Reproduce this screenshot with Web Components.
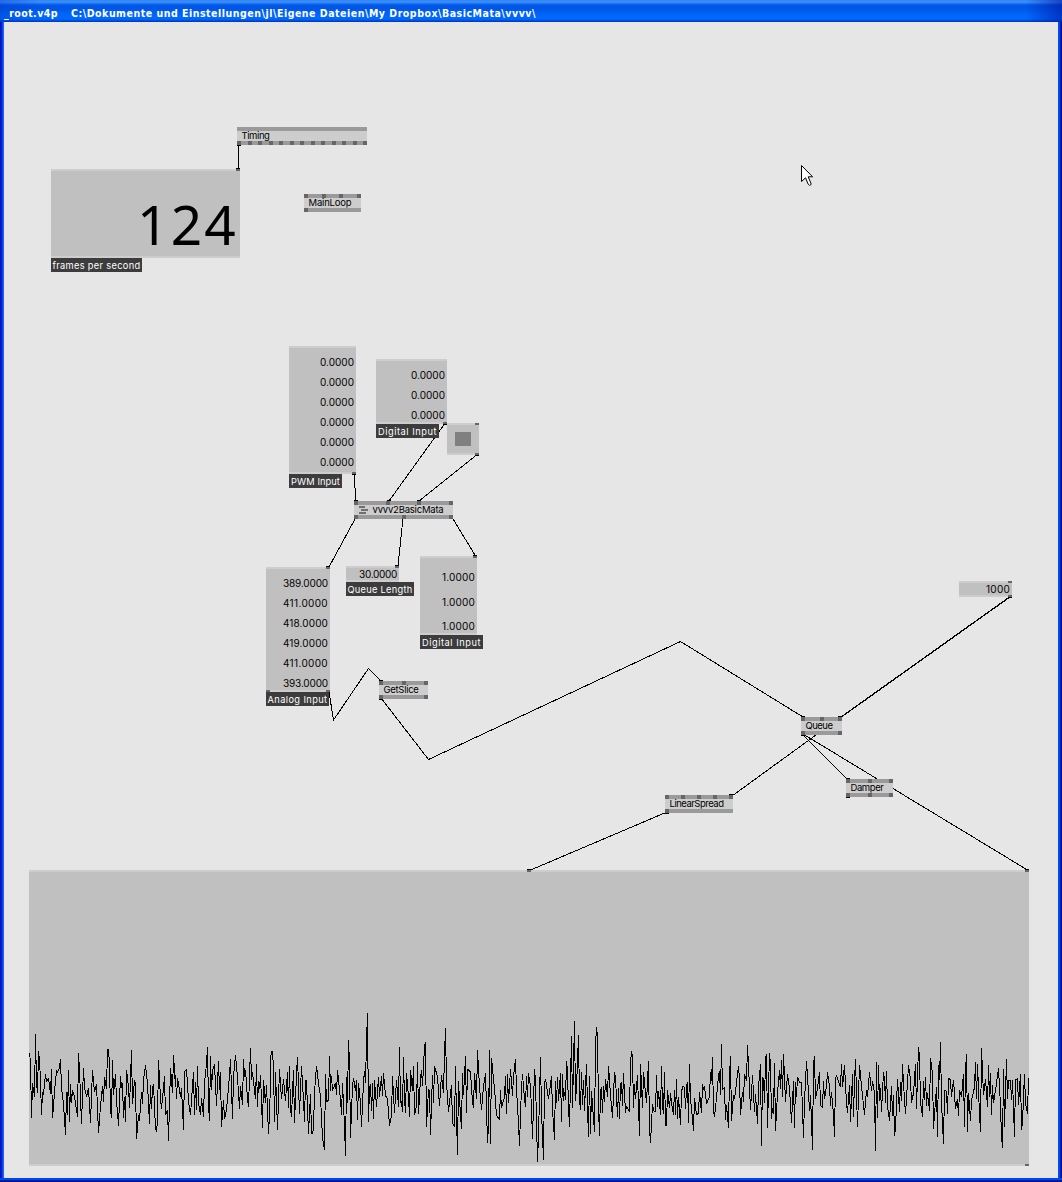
<!DOCTYPE html>
<html lang="de">
<head>
<meta charset="utf-8">
<title>_root.v4p</title>
<style>
html,body{margin:0;height:100%;overflow:hidden}
body{font:9.5px/14px Inter,"Noto Sans",sans-serif;color:#000}
</style>
</head>
<body>
<patch-window file="_root.v4p" path="C:\Dokumente und Einstellungen\jl\Eigene Dateien\My Dropbox\BasicMata\vvvv\">
  <patch-links></patch-links>
  <patch-node x="237" y="127" w="130" top="0" bottom="13" name="Timing" tw="28"></patch-node>
  <patch-node x="304" y="194" w="57" top="4" bottom="1" name="MainLoop" tw="43"></patch-node>
  <patch-node x="354" y="501" w="99" top="4" bottom="3" name="vvvv2BasicMata" tw="71" icon></patch-node>
  <patch-node x="379" y="681" w="49" top="3" bottom="2" name="GetSlice" tw="35"></patch-node>
  <patch-node x="801" y="717" w="41" top="3" bottom="2" name="Queue" tw="27"></patch-node>
  <patch-node x="846" y="779" w="47" top="3" bottom="3" name="Damper" tw="33"></patch-node>
  <patch-node x="665" y="795" w="68" top="5" bottom="1" name="LinearSpread" tw="54"></patch-node>

  <io-box x="51" y="169" w="189" h="89" top="r" values="124" tw="101" row="56" pad="25" size="55" label="frames per second" lw="91" ltw="88"></io-box>
  <io-box x="289" y="346" w="67" h="128" bottom="r" values="0.0000 0.0000 0.0000 0.0000 0.0000 0.0000" tw="34" row="20" pad="4" label="PWM Input" lw="53" ltw="49"></io-box>
  <io-box x="376" y="359" w="71" h="65" bottom="r" values="0.0000 0.0000 0.0000" tw="34" row="20" pad="4" label="Digital Input" lw="63" ltw="59"></io-box>
  <io-box x="447" y="423" w="32" h="32" top="r" bottom="r" bang></io-box>
  <io-box x="266" y="567" w="64" h="125" top="r" bottom="b" values="389.0000 411.0000 418.0000 419.0000 411.0000 393.0000" tw="45" row="20" pad="4" label="Analog Input" lw="63" ltw="60"></io-box>
  <io-box x="346" y="566" w="53" h="16" top="r" values="30.0000" tw="38" row="12" pad="0" label="Queue Length" lw="68" ltw="65"></io-box>
  <io-box x="420" y="556" w="57" h="79" top="r" values="1.0000 1.0000 1.0000" tw="33" row="24.5" pad="7" label="Digital Input" lw="63" ltw="59"></io-box>
  <io-box x="959" y="581" w="53" h="16" top="r" bottom="r" values="1000" tw="24" row="12" pad="0"></io-box>
  <io-box x="29" y="870" w="1000" h="296" top="m" bottom="r"><signal-plot></signal-plot></io-box>
  <link-ends></link-ends>
  <mouse-pointer></mouse-pointer>
</patch-window>

<script>
class FitText extends HTMLElement{
  connectedCallback(){
    if(!this.shadowRoot) this.attachShadow({mode:'open'}).innerHTML='<style>:host{display:inline-block;flex:none;white-space:pre}</style><slot></slot>';
    const n=this.textContent.length, want=+this.getAttribute('w');
    this.style.letterSpacing='0px';
    this.style.letterSpacing=((want-this.getBoundingClientRect().width)/n)+'px';
  }
}
customElements.define('fit-text',FitText);

class PatchWindow extends HTMLElement{
  connectedCallback(){
    this.attachShadow({mode:'open'}).innerHTML=`<style>
    :host{display:flex;flex-direction:column;width:1062px;height:1182px;box-sizing:border-box}
    header{flex:none;height:22px;box-sizing:border-box;padding:4px 0 0 4px;display:flex;gap:13px;color:#fff;font:bold 10.5px/18px "DejaVu Sans Condensed","DejaVu Sans",sans-serif;
      background:linear-gradient(90deg,rgba(0,50,200,.35),transparent 40px calc(100% - 36px),rgba(0,20,160,.6)),linear-gradient(#2a74e8 0,#3f96ff 1px,#2c80f8 3px,#0058e6 5px,#0055e5 8px,#0062f6 13px,#006aff 18px,#0060f2 20px,#003fd0 21px,#0038c4 22px)}
    .frame{flex:1;display:flex;min-height:0}
    .side{flex:none;width:4px}
    .l{background:linear-gradient(90deg,#0015c4 0 1px,#0020d0 1px 2px,#0848e8 2px 3px,#1668f4 3px)}
    .r{background:linear-gradient(90deg,#0048f0 0 2px,#0020b8 2px 3px,#00108c 3px)}
    .canvas{flex:1;background:#e6e6e6}
    footer{flex:none;height:4px;background:linear-gradient(#0046f0 0 2px,#0020b0 2px 3px,#00128a 3px)}
    </style><header><fit-text w="54">${this.getAttribute('file')}</fit-text><fit-text w="465"></fit-text></header>
    <div class="frame"><div class="side l"></div><div class="canvas"><slot></slot></div><div class="side r"></div></div><footer></footer>`;
    const p=this.shadowRoot.querySelectorAll('fit-text')[1];
    p.textContent=this.getAttribute('path');p.connectedCallback();
  }
}
customElements.define('patch-window',PatchWindow);

class PatchNode extends HTMLElement{
  connectedCallback(){
    const a=k=>this.getAttribute(k),pins=n=>'<i></i>'.repeat(+n);
    this.attachShadow({mode:'open'}).innerHTML=`<style>
    :host{position:absolute;left:${a('x')}px;top:${a('y')}px;width:${a('w')}px;height:18px;display:flex;flex-direction:column;background:#cdcdcd}
    .bar{height:4px;background:#9a9a9a;display:flex;justify-content:space-between}
    i{width:4px;height:4px;background:#666}
    .body{height:10px;display:flex;align-items:center;padding-left:4.5px;line-height:10px}
    svg{margin:0 4.5px 0 .5px;flex:none}
    </style><div class="bar">${pins(a('top'))}</div>
    <div class="body">${this.hasAttribute('icon')?'<svg width="9" height="8" shape-rendering="crispEdges" fill="#707070"><path d="M0 0h6v2H0zM2 3h7v2H2zM0 6h7v2H0z"/></svg>':''}<fit-text w="${a('tw')}">${a('name')}</fit-text></div>
    <div class="bar">${pins(a('bottom'))}</div>`;
  }
}
customElements.define('patch-node',PatchNode);

class IoBox extends HTMLElement{
  connectedCallback(){
    const a=k=>this.getAttribute(k);
    const pins=k=>({r:'<b></b><i></i>',b:'<i></i><i></i>',m:'<b></b><i></i><i></i>'})[k]||'';
    const vals=(a('values')||'').split(' ').filter(Boolean).map(v=>`<div class="v"><fit-text w="${a('tw')}">${v}</fit-text></div>`).join('');
    const big=a('size');
    this.attachShadow({mode:'open'}).innerHTML=`<style>
    :host{position:absolute;left:${a('x')}px;top:${a('y')}px;width:${a('w')}px;display:block}
    .box{height:${a('h')}px;background:#c0c0c0;display:flex;flex-direction:column}
    .bar{flex:none;height:2px;background:#cdcdcd;display:flex;justify-content:space-between}
    .bar i{width:4px;height:2px;background:#666}
    .bar b{width:4px}
    .mid{flex:1;min-height:0;padding-top:${a('pad')||0}px;box-sizing:border-box;display:flex;flex-direction:column}
    .v{flex:none;height:${a('row')||0}px;line-height:${a('row')||0}px;display:flex;justify-content:flex-end;padding-right:2px;font-size:10px}
    ${big?`.v{font:${big}px/${a('row')}px "Noto Sans","Open Sans",sans-serif}`:''}
    .bang{width:16px;height:14px;background:#808080;margin:auto}
    .label{width:${a('lw')}px;height:14px;box-sizing:border-box;padding-top:1px;background:#3c3c3c;color:#fff;font-size:9.25px;display:flex;justify-content:center}
    </style><div class="box"><div class="bar">${pins(a('top'))}</div>
    <div class="mid">${vals}${this.hasAttribute('bang')?'<div class="bang"></div>':''}<slot></slot></div>
    <div class="bar">${pins(a('bottom'))}</div></div>
    ${a('label')?`<div class="label"><fit-text w="${a('ltw')}">${a('label')}</fit-text></div>`:''}`;
  }
}
customElements.define('io-box',IoBox);

const layer=':host{position:absolute;left:0;top:0;display:block;pointer-events:none}svg{display:block}';

class PatchLinks extends HTMLElement{
  connectedCallback(){
    const l=['238.5,145 238.5,169','354.5,474 355.5,501','444.5,424 389,501','476.5,455 419,501','355,519 329,567','403,518 398,566','452.5,518 475.5,556',
    '329,692 333.5,720 368.5,668.5 382,682','381,698 428.5,759.5 680.5,641.5 803,717','1010,597 841.5,717','1009.4,597 840.9,717','816,735 732,796','803,735 848,780','803,734 1027.5,870','667,812 529.5,870.5'];
    this.attachShadow({mode:'open'}).innerHTML=`<style>${layer}</style><svg width="1062" height="1182" fill="none" stroke="#000" shape-rendering="crispEdges">${l.map(p=>`<polyline points="${p}"/>`).join('')}</svg>`;
  }
}
customElements.define('patch-links',PatchLinks);

class LinkEnds extends HTMLElement{
  connectedCallback(){
    const e=[[237,145],[236,168],[352,474],[354,500],[387,500],[417,500],[443,424],[475,455],[326,566],[395,565],[473,555],[379,680],[379,699],[801,716],[838,716],[801,735],[846,778],[846,797],[729,794],[665,813],[1008,597],[527,869],[1025,869]];
    this.attachShadow({mode:'open'}).innerHTML=`<style>${layer}</style><svg width="1062" height="1182">${e.map(([x,y])=>`<rect x="${x}" y="${y}" width="4" height="1"/>`).join('')}</svg>`;
  }
}
customElements.define('link-ends',LinkEnds);

/* Samples in thirds of a pixel, one list per stretch of 250 px. */
const samples=[
"28,158 31,186 34,353 38,250 42,290 46,102 49,248 53,278 55,153 58,180 61,240 65,345 68,276 71,284 76,222 79,247 85,235 91,282 95,207 97,353 101,320 104,276 109,211 113,218 118,202 121,178 125,262 131,312 137,404 140,276 142,345 145,210 148,365 151,252 154,310 158,270 164,290 172,350 175,159 178,210 182,290 185,371 190,204 193,262 199,290 206,264 212,368 218,210 224,276 229,252 235,398 240,318 247,258 250,305 254,231 259,266 263,147 266,147 268,192 271,332 274,353 277,180 280,284 286,222 290,300 295,377 301,228 304,264 307,250 310,353 313,290 316,365 319,210 325,260 329,323 334,150 337,311 343,240 346,252 349,416 355,345 358,362 364,276 367,313 371,240 376,195 382,252 388,371 391,255 394,326 397,264 400,252 406,386 409,395 412,360 415,180 420,295 424,326 429,264 433,228 437,345 441,330 445,422 451,204 457,278 460,165 465,260 466,225 469,297 473,234 480,290 484,264 490,389 494,216 499,207 505,303 512,345 519,216 523,345 526,246 529,329 532,198 535,310 541,345 545,294 550,350 554,247 558,192 562,141 565,315 568,362 571,168 574,270 577,213 583,192 589,317 595,183 598,270 600,216 604,380 610,300 613,356 619,330 628,227 631,178 637,356 641,228 646,165 652,232 657,326 661,258 667,315 670,178 673,230 676,210 682,296 685,320 691,144 694,240 697,216 706,298 709,192 712,320 715,243 718,266 721,225 727,383 730,240 736,310 739,255 745,401 748,345",
"0,250 2,180 5,153 7,153 9,205 13,365 17,216 22,389 28,207 34,298 40,237 46,303 52,216 55,325 58,198 61,328 65,350 70,210 73,368 79,222 82,171 88,341 94,198 100,300 103,365 106,240 109,244 115,401 121,282 125,401 127,401 129,386 134,277 139,198 145,250 151,290 158,414 163,449 166,222 169,306 175,300 178,168 181,272 184,228 188,272 196,248 199,284 202,210 211,298 214,344 217,250 223,377 226,467 229,231 232,308 235,120 238,186 241,413 247,258 250,234 256,272 259,240 262,360 265,250 271,308 274,380 280,247 284,213 287,250 290,123 292,39 295,365 298,266 301,252 304,332 307,250 310,356 313,240 319,320 325,231 329,290 334,228 337,287 340,220 346,287 352,296 358,377 364,348 367,228 373,338 379,240 385,320 388,141 391,308 394,304 397,335 400,171 403,300 406,338 409,220 415,290 418,350 421,210 427,272 430,198 433,345 439,318 442,186 445,341 451,236 454,210 457,258 463,138 466,126 469,380 474,268 478,274 481,404 487,225 490,310 493,198 502,231 508,317 514,225 520,280 524,163 526,84 529,248 535,335 544,255 547,370 552,380 556,198 559,350 562,464 565,243 568,300 574,386 577,220 580,284 586,168 589,338 592,207 600,216 607,308 611,323 613,220 619,298 622,150 628,262 634,329 640,260 646,220 652,428 655,380 658,150 661,431 664,174 673,266 680,345 688,359 691,270 695,325 703,290 706,228 709,341 712,222 715,310 721,207 727,287 730,228 736,178 740,266 745,371 748,437",
"1,345 4,262 7,222 12,298 16,320 20,228 22,290 26,220 32,258 34,330 38,416 43,207 47,240 52,485 55,407 61,171 64,335 70,479 73,250 76,237 85,298 94,228 97,330 103,419 106,243 109,310 112,231 115,302 121,220 124,365 127,222 130,302 133,276 136,300 139,183 142,213 145,323 148,380 154,108 157,323 163,63 166,302 169,264 175,105 178,302 181,329 184,216 187,314 190,240 193,332 199,192 202,323 205,410 208,228 211,401 214,273 220,356 223,395 226,138 229,81 232,110 235,323 238,407 241,276 244,262 247,338 250,258 253,305 256,237 261,290 265,198 271,284 277,353 283,216 286,236 292,350 295,264 298,356 301,255 304,246 307,317 310,220 316,338 320,318 328,335 331,190 334,153 337,171 340,323 343,252 347,298 352,225 358,407 361,192 367,323 370,216 379,308 385,183 388,386 391,428 397,312 400,332 406,335 409,225 412,320 415,273 421,344 424,198 427,317 430,341 433,216 436,377 439,377 442,270 448,325 451,280 457,330 460,344 463,270 466,344 469,237 472,356 475,290 481,374 484,280 488,258 493,262 496,326 499,262 502,246 505,368 508,192 511,300 514,326 520,392 523,294 529,345 535,340 539,276 544,338 547,252 551,270 553,258 560,311 568,290 571,216 574,243 577,171 580,335 583,350 588,294 595,228 598,213 601,284 604,132 607,270 613,262 616,359 619,314 625,383 628,228 631,168 634,362 640,284 643,298 648,248 655,198 659,240 662,344 667,276 670,305 673,222 679,243 682,135 688,262 691,329 697,225 703,335 706,282 712,371 716,262 721,192 724,437 727,231 730,240 733,308 736,174 739,162 742,383 748,159",
"0,192 4,356 8,325 10,343 13,190 16,392 22,280 28,210 31,266 34,180 37,290 40,162 46,305 52,222 58,266 64,368 70,243 73,383 76,247 79,290 82,231 88,247 94,247 100,413 103,300 106,247 109,183 115,276 118,332 121,285 127,449 130,192 133,168 136,297 142,266 148,216 151,317 156,323 160,243 163,297 169,258 172,216 178,258 181,317 184,276 190,345 193,410 196,240 200,225 211,262 214,192 217,262 223,195 229,310 232,338 238,255 241,365 247,222 250,350 253,240 256,178 262,380 268,195 274,258 283,344 289,270 292,290 298,216 304,272 307,244 313,278 316,452 319,186 322,353 325,195 328,302 331,264 334,335 340,216 343,240 346,308 349,213 352,317 357,362 364,258 367,347 370,286 373,407 376,386 382,237 388,335 391,247 394,302 397,192 403,300 406,341 412,247 415,195 421,240 424,308 430,280 436,192 440,326 445,141 448,171 451,305 457,350 460,243 463,300 466,231 469,317 472,280 478,332 481,174 487,220 490,386 496,302 499,262 502,410 505,195 508,240 511,126 514,308 520,431 523,270 529,274 532,341 535,234 541,240 544,290 550,240 556,326 562,297 565,347 568,270 574,290 580,222 583,380 586,210 589,162 592,395 595,280 601,362 604,302 613,262 616,186 619,297 622,192 628,344 631,395 634,144 640,284 646,237 652,320 655,195 658,290 661,220 664,344 667,254 670,310 679,250 685,204 691,317 694,410 697,443 700,207 703,380 709,178 712,298 715,240 721,240 724,300 727,240 733,410 736,240 742,236 745,314 751,222 754,389 757,370 760,290 763,222 766,310 772,341 775,234"];

class SignalPlot extends HTMLElement{
  connectedCallback(){
    const start=[20,270,520,770],pts=samples.map((s,k)=>s.split(' ').map(p=>{
      const [x,y]=p.split(',').map(Number);
      return (Math.floor(x/3)+start[k]-29+.5)+','+(y/3+128).toFixed(1);
    }).join(' ')).join(' ');
    this.attachShadow({mode:'open'}).innerHTML=`<style>:host{display:block}svg{display:block}</style><svg width="1000" height="292" shape-rendering="crispEdges"><polyline points="${pts}" fill="none" stroke="#000" stroke-linejoin="bevel"/></svg>`;
  }
}
customElements.define('signal-plot',SignalPlot);

class MousePointer extends HTMLElement{
  connectedCallback(){
    this.attachShadow({mode:'open'}).innerHTML=`<style>:host{position:absolute;left:801px;top:165px;display:block}svg{display:block}</style><svg width="13" height="22"><path d="M.5.5V16.5L4.5 12.8L7.2 19.2Q8.2 21.2 9.8 19.8Q10.4 19.2 9.8 18L7.2 11.8H11.6Z" fill="#fff" stroke="#000"/></svg>`;
  }
}
customElements.define('mouse-pointer',MousePointer);
</script>
</body>
</html>
